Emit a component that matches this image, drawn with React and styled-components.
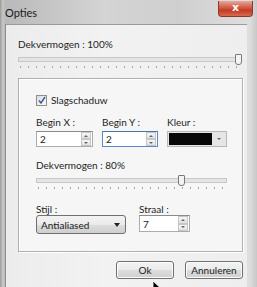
import React from 'react';
import styled, { createGlobalStyle } from 'styled-components';

const GlobalStyle = createGlobalStyle`
  html, body { margin: 0; padding: 0; background: #c8c8c8; }
  body { font-family: Lato, "Liberation Sans", sans-serif; font-size: 10px; color: #1a1a1a; }
`;

export default function App() {
  return (
    <>
      <GlobalStyle />
      <Window>
        <TitleBar>
          <Title>Opties</Title>
          <CloseButton>x</CloseButton>
        </TitleBar>
        <Client>
          <Label>Dekvermogen : 100%</Label>
          <Slider width={223} value={1} />
          <GroupBox>
            <CheckRow>
              <CheckBox>
                <svg width="8" height="8" viewBox="0 0 8 8">
                  <path d="M1 4.5 L3 7 L7 1" fill="none" stroke="#3a5a9a" strokeWidth="1.4" />
                </svg>
              </CheckBox>
              Slagschaduw
            </CheckRow>
            <FieldRow>
              <Field>
                <Label>Begin X :</Label>
                <SpinInput width={57} value="2" />
              </Field>
              <Field>
                <Label>Begin Y :</Label>
                <SpinInput width={56} value="2" focused />
              </Field>
              <Field>
                <Label>Kleur :</Label>
                <ColorBox>
                  <Swatch />
                  <ColorArrow><Tri down small /></ColorArrow>
                </ColorBox>
              </Field>
            </FieldRow>
            <SubSlider>
              <Label>Dekvermogen : 80%</Label>
              <Slider width={191} value={0.77} />
            </SubSlider>
            <FieldRow wide>
              <Field tight>
                <Label>Stijl :</Label>
                <Select>
                  <span>Antialiased</span>
                  <Tri down />
                </Select>
              </Field>
              <Field tight>
                <Label>Straal :</Label>
                <SpinInput width={51} value="7" tall />
              </Field>
            </FieldRow>
          </GroupBox>
          <ButtonRow>
            <Button>Ok</Button>
            <Button>Annuleren</Button>
          </ButtonRow>
          <Cursor width="10" height="14" viewBox="0 0 10 14">
            <path d="M1 1 L1 11 L3.5 8.5 L5.5 13 L7 12.3 L5 8 L8.5 8 Z" fill="#000" stroke="#fff" strokeWidth="0.8" />
          </Cursor>
        </Client>
      </Window>
    </>
  );
}

function Slider({ width, value }) {
  return (
    <SliderWrap style={{ width }}>
      <Track />
      <Thumb style={{ left: Math.round((width - 6) * value) }} />
      <Ticks />
    </SliderWrap>
  );
}

function SpinInput({ width, value, focused, tall }) {
  return (
    <InputBox style={{ width }} focused={focused} tall={tall}>
      <span>{value}</span>
      <Spinner>
        <SpinBtn><Tri small /></SpinBtn>
        <SpinBtn><Tri down small /></SpinBtn>
      </Spinner>
    </InputBox>
  );
}

const Window = styled.div`
  width: 257px;
  height: 287px;
  display: flex;
  flex-direction: column;
  background: linear-gradient(90deg, #9a9a9a 0px, #c9c9c9 3px, #b9b9b9 5px, #d4d4d4 40%, #cfcfcf 70%, #dedede 97%, #c8c8c8 100%);
  overflow: hidden;
  position: relative;
`;

const TitleBar = styled.div`
  height: 24px;
  display: flex;
  align-items: flex-start;
  position: relative;
`;

const Title = styled.div`
  padding: 6px 0 0 5px;
  font-size: 11px;
  color: #1a1a1a;
`;

const CloseButton = styled.div`
  position: absolute;
  left: 218px;
  top: 1px;
  width: 35px;
  height: 16px;
  border: 1px solid #8a3a2a;
  border-top: none;
  border-radius: 0 0 4px 4px;
  background: linear-gradient(#e8a89a, #d0503a 50%, #c03a24 60%, #d86a50);
  color: #fff;
  font-weight: bold;
  font-size: 11px;
  text-align: center;
  line-height: 14px;
  font-family: "DejaVu Sans", sans-serif;
  box-sizing: border-box;
`;

const Client = styled.div`
  flex: 1;
  margin: 0 10px 0 5px;
  border-left: 1px solid #8c8c8c;
  border-top: 1px solid #9a9a9a;
  background: linear-gradient(90deg, #ececec, #f2f2f2 40%, #eeeeee);
  padding: 13px 0 0 12px;
  display: flex;
  flex-direction: column;
  position: relative;
`;

const Label = styled.div`
  font-size: 10px;
  line-height: 12px;
  color: #1e1e1e;
  white-space: nowrap;
`;

const SliderWrap = styled.div`
  position: relative;
  height: 16px;
  margin-top: 3px;
`;

const Track = styled.div`
  position: absolute;
  left: 0;
  right: 0;
  top: 4px;
  height: 3px;
  border: 1px solid #c8c8c8;
  background: #e4e4e4;
`;

const Thumb = styled.div`
  position: absolute;
  top: 1px;
  width: 5px;
  height: 9px;
  border: 1px solid #7a7a7a;
  border-radius: 1px 1px 3px 3px;
  background: #f4f4f4;
`;

const Ticks = styled.div`
  position: absolute;
  left: 2px;
  right: 2px;
  top: 13px;
  height: 2px;
  background: repeating-linear-gradient(90deg, #a8a8a8 0 1px, transparent 1px 8px);
`;

const GroupBox = styled.div`
  margin-top: 9px;
  width: 225px;
  height: 174px;
  box-sizing: border-box;
  border: 1px solid #b0b0b0;
  box-shadow: inset 1px 1px 0 #fff, 1px 1px 0 #fff;
  background: #f6f6f6;
  padding: 15px 0 0 17px;
  display: flex;
  flex-direction: column;
`;

const CheckRow = styled.div`
  display: flex;
  align-items: center;
  gap: 4px;
  font-size: 10px;
  height: 12px;
`;

const CheckBox = styled.div`
  width: 9px;
  height: 9px;
  border: 1px solid #8e8f8f;
  background: linear-gradient(135deg, #dcdcdc, #fafafa);
  display: flex;
  align-items: center;
  justify-content: center;
`;

const FieldRow = styled.div`
  display: flex;
  gap: ${p => (p.wide ? '13px' : '9px')};
  margin-top: ${p => (p.wide ? '13px' : '10px')};
`;

const Field = styled.div`
  display: flex;
  flex-direction: column;
  gap: ${p => (p.tight ? '0px' : '3px')};
`;

const InputBox = styled.div`
  height: ${p => (p.tall ? '17px' : '16px')};
  box-sizing: border-box;
  border: 1px solid ${p => (p.focused ? '#5a8ac6' : '#acacac')};
  border-top-color: ${p => (p.focused ? '#3d7bad' : '#8a8a8a')};
  background: #fff;
  display: flex;
  align-items: center;
  justify-content: space-between;
  padding-left: 3px;
  font-size: 10px;
`;

const Spinner = styled.div`
  display: flex;
  flex-direction: column;
  height: 100%;
  width: 10px;
  margin-right: 1px;
`;

const SpinBtn = styled.div`
  flex: 1;
  border: 1px solid #c6c6c6;
  background: linear-gradient(#f6f6f6, #e2e2e2);
  display: flex;
  align-items: center;
  justify-content: center;
`;

const Tri = styled.span`
  display: block;
  width: 0;
  height: 0;
  border-left: ${p => (p.small ? '2px' : '3px')} solid transparent;
  border-right: ${p => (p.small ? '2px' : '3px')} solid transparent;
  ${p => (p.down ? 'border-top' : 'border-bottom')}: ${p => (p.small ? '2px' : '4px')} solid ${p => (p.small ? '#666' : '#222')};
`;

const ColorBox = styled.div`
  width: 60px;
  height: 16px;
  box-sizing: border-box;
  border: 1px solid #b8b8b8;
  background: #e6e6e6;
  display: flex;
  align-items: stretch;
  padding: 1px;
`;

const Swatch = styled.div`
  width: 43px;
  background: #080808;
`;

const ColorArrow = styled.div`
  flex: 1;
  display: flex;
  align-items: center;
  justify-content: center;
`;

const SubSlider = styled.div`
  margin-top: 12px;
  display: flex;
  flex-direction: column;
`;

const Select = styled.div`
  width: 90px;
  height: 19px;
  box-sizing: border-box;
  border: 1px solid #707070;
  border-radius: 3px;
  background: linear-gradient(#f2f2f2, #ebebeb 50%, #dddddd 51%, #cfcfcf);
  display: flex;
  align-items: center;
  justify-content: space-between;
  padding: 0 5px 0 4px;
  font-size: 10px;
`;

const ButtonRow = styled.div`
  display: flex;
  justify-content: flex-end;
  gap: 11px;
  width: 225px;
  margin-top: 9px;
`;

const Button = styled.div`
  width: 58px;
  height: 18px;
  box-sizing: border-box;
  border: 1px solid #707070;
  border-radius: 3px;
  background: linear-gradient(#f2f2f2, #ebebeb 50%, #dddddd 51%, #cfcfcf);
  box-shadow: inset 0 0 0 1px #fcfcfc;
  text-align: center;
  font-size: 10px;
  line-height: 16px;
`;

const Cursor = styled.svg`
  position: absolute;
  left: 146px;
  top: 255px;
`;
